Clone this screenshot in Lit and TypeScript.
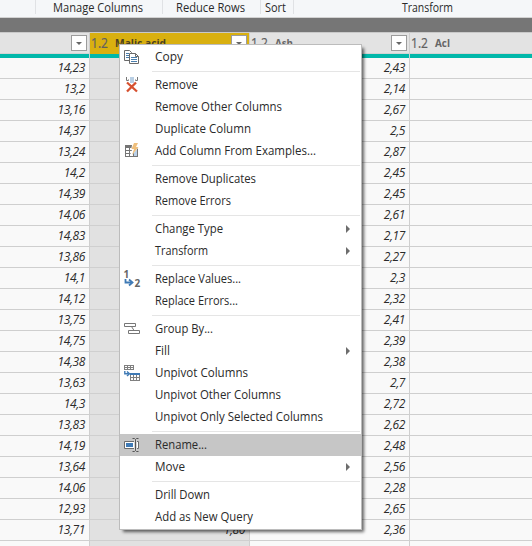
import { LitElement, html, css, svg, nothing } from "lit";
import { customElement } from "lit/decorators.js";
import { classMap } from "lit/directives/class-map.js";

type Item = { label: string; width: number; icon?: string; sub?: boolean; active?: boolean };

const GROUPS: Item[][] = [
  [{ label: "Copy", width: 28, icon: "copy" }],
  [
    { label: "Remove", width: 43, icon: "remove" },
    { label: "Remove Other Columns", width: 127 },
    { label: "Duplicate Column", width: 96 },
    { label: "Add Column From Examples...", width: 161, icon: "examples" },
  ],
  [
    { label: "Remove Duplicates", width: 101 },
    { label: "Remove Errors", width: 76 },
  ],
  [
    { label: "Change Type", width: 68, sub: true },
    { label: "Transform", width: 53, sub: true },
  ],
  [
    { label: "Replace Values...", width: 86, icon: "replace" },
    { label: "Replace Errors...", width: 83 },
  ],
  [
    { label: "Group By...", width: 58, icon: "group" },
    { label: "Fill", width: 15, sub: true },
    { label: "Unpivot Columns", width: 93, icon: "unpivot" },
    { label: "Unpivot Other Columns", width: 126 },
    { label: "Unpivot Only Selected Columns", width: 168 },
  ],
  [
    { label: "Rename...", width: 52, icon: "rename", active: true },
    { label: "Move", width: 30, sub: true },
  ],
  [
    { label: "Drill Down", width: 55 },
    { label: "Add as New Query", width: 98 },
  ],
];

const ALCOHOL = ["14,23","13,2","13,16","14,37","13,24","14,2","14,39","14,06","14,83","13,86","14,1","14,12","13,75","14,75","14,38","13,63","14,3","13,83","14,19","13,64","14,06","12,93","13,71"];
const ASH = ["2,43","2,14","2,67","2,5","2,87","2,45","2,45","2,61","2,17","2,27","2,3","2,32","2,41","2,39","2,38","2,7","2,72","2,62","2,48","2,56","2,28","2,65","2,36"];
const MALIC = Array.from({ length: 23 }, (_, i) => (i === 22 ? "1,80" : ""));

const ICONS: Record<string, unknown> = {
  copy: svg`
    <path d="M.5 1.500h5l2 2v8h-7z" fill="#fff" stroke="#6a6a6a"/>
    <path d="M2 4.500h3M2 6.500h3M2 8.500h3" stroke="#4a7ead"/>
    <path d="M5.500 4.500h6l3 3v7h-9z" fill="#fff" stroke="#6a6a6a"/>
    <path d="M11.500 4.500v3h3" fill="none" stroke="#6a6a6a"/>
    <path d="M7 8.500h6M7 10.500h6M7 12.500h6" stroke="#4a7ead"/>`,
  remove: svg`
    <path d="M2.500 0v3.500h2v-1M13.500 0v3.500h-2v-1" fill="none" stroke="#777"/>
    <path d="M6 0h4v6h-4z" fill="#b9cfe4"/>
    <path d="M3 5.500l10 9M12 5.500l-9 9" stroke="#d6502f" stroke-width="2.300"/>`,
  examples: svg`
    <path d="M1 2h13v12h-13z" fill="#757575"/>
    <path d="M2 5h3v2h-3zM6 5h3v2h-3zM2 8h3v2h-3zM6 8h3v2h-3zM2 11h3v2h-3zM6 11h3v2h-3z" fill="#fff"/>
    <path d="M10 5h3v8h-3z" fill="#b9d0e8"/>
    <path d="M8.500 0h6.500v4h-1v1l-6 7h-2l2-5h-1z" fill="#fff"/>
    <path d="M10 0h4l-2 4h2.500l-6.500 8 2-6h-2.500z" fill="#efbf7c"/>`,
  replace: svg`
    <text class="digit" x="-.500" y="7">1</text>
    <text class="digit" x="10.500" y="16">2</text>
    <path d="M1.500 8v3.500h6" fill="none" stroke="#3f7ab5" stroke-width="1.800"/>
    <path d="M5 8.500l3.500 3-3.500 3" fill="none" stroke="#3f7ab5" stroke-width="1.800"/>`,
  group: svg`
    <path d="M.5 2.500h11v3h-11zM4.500 9.500h11v3h-11z" fill="#fff" stroke="#777"/>
    <path d="M7.500 5.500l2.500 4" stroke="#777"/>`,
  unpivot: svg`
    <path d="M0 0h10v5h-10z" fill="#808080"/>
    <path d="M1 1h2v1h-2zM4 1h2v1h-2zM7 1h2v1h-2zM1 3h2v1h-2zM4 3h2v1h-2zM7 3h2v1h-2z" fill="#fff"/>
    <path d="M6 8h10v8h-10z" fill="#808080"/><path d="M6 8h10v2h-10z" fill="#3f7ab5"/>
    <path d="M7 10h2v2h-2zM10 10h2v2h-2zM13 10h2v2h-2zM7 13h2v2h-2zM10 13h2v2h-2zM13 13h2v2h-2z" fill="#fff"/>
    <path d="M.8 6v2.800h4" fill="none" stroke="#3f7ab5" stroke-width="1.400"/>
    <path d="M3 6.500l2.500 2.300-2.500 2.300" fill="none" stroke="#3f7ab5" stroke-width="1.400"/>`,
  rename: svg`
    <path d="M.5 4.500h14v7h-14z" fill="#fff" stroke="#6c6c6c"/>
    <path d="M2 6h7v4h-7z" fill="#3f7ab5"/>
    <path d="M10 3h3v10h-3z" fill="#d5d5d5"/>
    <path d="M8.500 1.500h2l1 1 1-1h2M8.500 14.500h2l1-1 1 1h2M11.500 2.500v11" fill="none" stroke="#555"/>`,
};

@customElement("app-root")
export class AppRoot extends LitElement {
  static styles = css`
    :host { display: block; position: relative; width: 532px; height: 546px; overflow: hidden;
      font: 12px/22px "Open Sans", "Noto Sans", sans-serif; color: #2a2a2a; background: #f9f9f9; }
    .ribbon { display: flex; height: 18px; background: #f5f7f9; border-bottom: 1px solid #d2d2d2; box-sizing: border-box; }
    .tab { height: 14px; border-right: 1px solid #e0e2e5; box-sizing: border-box; display: flex; flex: none; }
    .tab.lead { width: 36px; }
    .tab.manage { width: 127px; padding-left: 17px; }
    .tab.reduce { width: 98px; padding-left: 13px; }
    .tab.sort { width: 33px; padding-left: 4px; }
    .tab.transform { width: 238px; padding-left: 108px; border: 0; }
    .strip { height: 14px; background: #767676; }
    .grid { display: grid; grid-template-columns: 90px 160px 160px 122px; }
    .col { border-right: 1px solid #cfcfcf; background: #f9f9f9; box-sizing: border-box; min-width: 0; }
    .col.last { border-right: 0; }
    .head { height: 22px; box-sizing: border-box; background: #e3e3e3; border-top: 1px solid #c9c9c9; border-bottom: 1px solid #d4d4d4;
      display: flex; align-items: center; padding: 0 2px 0 1px; }
    .fit, .label, .kind, .name { flex: none; overflow: visible; fill: #2a2a2a; }
    .label { height: 22px; }
    .fit { height: 17px; }
    .kind { height: 20px; font-size: 14px; fill: #606060; stroke: #606060; stroke-width: .2px; margin-right: 7px; }
    .name { height: 20px; font-size: 11px; font-weight: 700; fill: #666; }
    .selected .head { background: #d9b010; border-bottom-color: #d9b010; }
    .selected .name { fill: #4a4020; }
    .drop { margin-left: auto; width: 14px; height: 14px; border: 1px solid #9c9c9c; background: #fff; display: flex; align-items: center; justify-content: center; }
    .drop::after { content: ""; border: 3px solid transparent; border-top-color: #666; border-bottom: 0; }
    .quality { height: 4px; background: #01b8aa; }
    .cell { height: 21px; line-height: 20px; box-sizing: border-box; border-bottom: 1px solid #cfcfcf; text-align: right;
      padding-right: 4px; font-style: italic; letter-spacing: -.4px; }
    .selected { background: #e1e1e1; }
    .menu { position: absolute; left: 119px; top: 44px; width: 243px; height: 486px; box-sizing: border-box; padding: 1px 0;
      border: 1px solid #bcbcbc; background: #fff; box-shadow: 3px 3px 3px -1px rgba(0,0,0,.6); }
    .item { height: 22px; display: flex; align-items: center; padding: 0 11px 0 4px; }
    .item.active { background: #c6c6c6; }
    .icon { width: 16px; height: 16px; margin-right: 15px; flex: none; overflow: visible; }
    .digit { font: 700 10px "Open Sans", sans-serif; fill: #666; }
    .arrow { margin-left: auto; border: 4px solid transparent; border-left: 4px solid #6d6d6d; border-right: 0; }
    .rule { height: 1px; margin: 3px 1px 2px 32px; background: #e5e5e5; }
  `;

  text(label: string, width: number, cls = "label", y = 15) {
    return html`<svg class=${cls} width=${width}><text x="0" y=${y} textLength=${width} lengthAdjust="spacingAndGlyphs">${label}</text></svg>`;
  }

  column(name: string, width: number, values: string[], cls = "") {
    return html`<div class=${"col " + cls}>
      <div class="head">
        ${name ? html`${this.text("1.2", 17, "kind", 15)}${this.text(name, width, "name", 14)}` : nothing}
        ${cls === "last" ? nothing : html`<span class="drop"></span>`}
      </div>
      <div class="quality"></div>
      ${Array.from({ length: 24 }, (_, i) => html`<div class="cell">${values[i] || nothing}</div>`)}
    </div>`;
  }

  render() {
    return html`
      <div class="ribbon">
        <div class="tab lead"></div>
        <div class="tab manage">${this.text("Manage Columns", 90, "fit", 12)}</div>
        <div class="tab reduce">${this.text("Reduce Rows", 69, "fit", 12)}</div>
        <div class="tab sort">${this.text("Sort", 21, "fit", 12)}</div>
        <div class="tab transform">${this.text("Transform", 51, "fit", 12)}</div>
      </div>
      <div class="strip"></div>
      <div class="grid">
        ${this.column("", 0, ALCOHOL)}
        ${this.column("Malic acid", 51, MALIC, "selected")}
        ${this.column("Ash", 18, ASH)}
        ${this.column("Acl", 15, [], "last")}
      </div>
      <div class="menu">
        ${GROUPS.map((g, i) => html`${i ? html`<div class="rule"></div>` : nothing}
          ${g.map((it) => html`<div class=${classMap({ item: true, active: !!it.active })}>
            <svg class="icon" viewBox="0 0 16 16">${it.icon ? ICONS[it.icon] : nothing}</svg>
            ${this.text(it.label, it.width)}
            ${it.sub ? html`<span class="arrow"></span>` : nothing}
          </div>`)}`)}
      </div>`;
  }
}
